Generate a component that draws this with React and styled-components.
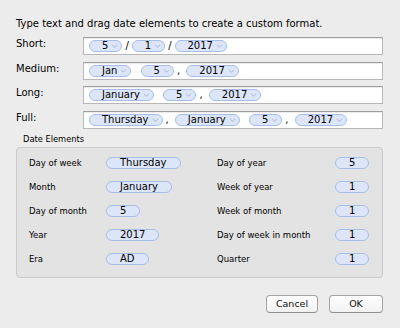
import styled, { createGlobalStyle } from 'styled-components';

const formats = [
  { label: 'Short:', parts: [{ t: '5' }, '/', { t: '1' }, '/', { t: '2017' }] },
  { label: 'Medium:', parts: [{ t: 'Jan' }, ' ', { t: '5' }, ', ', { t: '2017' }] },
  { label: 'Long:', parts: [{ t: 'January' }, ' ', { t: '5' }, ', ', { t: '2017' }] },
  {
    label: 'Full:',
    parts: [{ t: 'Thursday' }, ', ', { t: 'January' }, ' ', { t: '5' }, ', ', { t: '2017' }],
  },
];

const elements = [
  ['Day of week', 'Thursday', 'Day of year', '5'],
  ['Month', 'January', 'Week of year', '1'],
  ['Day of month', '5', 'Week of month', '1'],
  ['Year', '2017', 'Day of week in month', '1'],
  ['Era', 'AD', 'Quarter', '1'],
];

const Arrow = () => (
  <ArrowBox>
    <svg width="7" height="6" viewBox="0 0 7 6">
      <path d="M1 1.8 L3.5 4.3 L6 1.8" fill="none" stroke="#a9b7d2" strokeWidth="1" />
    </svg>
  </ArrowBox>
);

const App = () => {
  return (
    <>
      <GlobalStyle />
      <Dialog>
        <Intro>Type text and drag date elements to create a custom format.</Intro>

        <FormatList>
          {formats.map((f) => (
            <FormatRow key={f.label}>
              <RowLabel>{f.label}</RowLabel>
              <Field>
                {f.parts.map((p, i) =>
                  typeof p === 'string' ? (
                    <Sep key={i}>{p}</Sep>
                  ) : (
                    <Token key={i}>
                      {p.t}
                      <Arrow />
                    </Token>
                  )
                )}
              </Field>
            </FormatRow>
          ))}
        </FormatList>

        <GroupTitle>Date Elements</GroupTitle>
        <Group>
          {elements.map(([l1, v1, l2, v2]) => (
            <ElementRow key={l1}>
              <ElementLabel>{l1}</ElementLabel>
              <Pill>{v1}</Pill>
              <ElementLabel>{l2}</ElementLabel>
              <Pill>{v2}</Pill>
            </ElementRow>
          ))}
        </Group>

        <Buttons>
          <Button $w={52}>Cancel</Button>
          <Button $w={54}>OK</Button>
        </Buttons>
      </Dialog>
    </>
  );
};

export default App;

// Styled Components

const GlobalStyle = createGlobalStyle`
  html, body {
    margin: 0;
    padding: 0;
    background: #ececec;
  }
  body {
    font-family: "DejaVu Sans", "Liberation Sans", sans-serif;
    color: #000;
  }
`;

const Dialog = styled.div`
  width: 400px;
  height: 328px;
  box-sizing: border-box;
  padding: 18px 17px 0 16px;
  display: flex;
  flex-direction: column;
  background: #ececec;
`;

const Intro = styled.div`
  font-size: 10px;
  line-height: 12px;
  height: 12px;
  white-space: nowrap;
`;

const FormatList = styled.div`
  margin-top: 7px;
  display: flex;
  flex-direction: column;
  gap: 6.5px;
`;

const FormatRow = styled.div`
  display: grid;
  grid-template-columns: 67px 1fr;
  height: 18px;
`;

const RowLabel = styled.div`
  font-size: 10px;
  line-height: 12px;
  margin-top: 1px;
`;

const Field = styled.div`
  display: flex;
  align-items: center;
  box-sizing: border-box;
  height: 18px;
  padding-left: 2px;
  background: #fff;
  border: 1px solid #b7b7b7;
  border-top-color: #9e9e9e;
  box-shadow: inset 0 1px 0 #ececec;
`;

const Token = styled.span`
  display: inline-flex;
  align-items: center;
  box-sizing: border-box;
  height: 12px;
  margin: 0 3px;
  padding: 0 3px 0 12px;
  border: 1px solid #a7bee9;
  border-radius: 6px;
  background: #dce6f8;
  font-size: 10px;
  line-height: 10px;
  white-space: nowrap;
`;

const ArrowBox = styled.span`
  display: inline-flex;
  margin-left: 3px;
  width: 7px;
  height: 6px;
`;

const Sep = styled.span`
  font-size: 10px;
  line-height: 12px;
  white-space: pre;
`;

const GroupTitle = styled.div`
  margin: 5.5px 0 3px 7px;
  font-size: 8.3px;
  line-height: 10px;
  height: 10px;
`;

const Group = styled.div`
  box-sizing: border-box;
  height: 131px;
  padding: 3px 12px 6px 12px;
  background: #e3e3e3;
  border: 1px solid #cbcbcb;
  border-radius: 4px;
`;

const ElementRow = styled.div`
  display: grid;
  grid-template-columns: 77px 111px 118px 1fr;
  align-items: center;
  justify-items: start;
  height: 24px;
`;

const ElementLabel = styled.span`
  font-size: 8.5px;
  line-height: 10px;
  white-space: nowrap;
`;

const Pill = styled.span`
  display: inline-flex;
  align-items: center;
  justify-content: center;
  box-sizing: border-box;
  height: 12px;
  padding: 0 13px;
  border: 1px solid #a7bee9;
  border-radius: 6px;
  background: #dce6f8;
  font-size: 10px;
  line-height: 10px;
`;

const Buttons = styled.div`
  margin-top: 17px;
  display: flex;
  justify-content: flex-end;
  gap: 11px;
`;

const Button = styled.button`
  width: ${(p) => p.$w}px;
  height: 18px;
  box-sizing: border-box;
  padding: 0;
  font-family: "DejaVu Sans", "Liberation Sans", sans-serif;
  font-size: 9.5px;
  line-height: 16px;
  color: #111;
  background: linear-gradient(#ffffff, #f1f1f1);
  border: 1px solid #a3a3a3;
  border-bottom-color: #8e8e8e;
  border-radius: 4px;
`;
